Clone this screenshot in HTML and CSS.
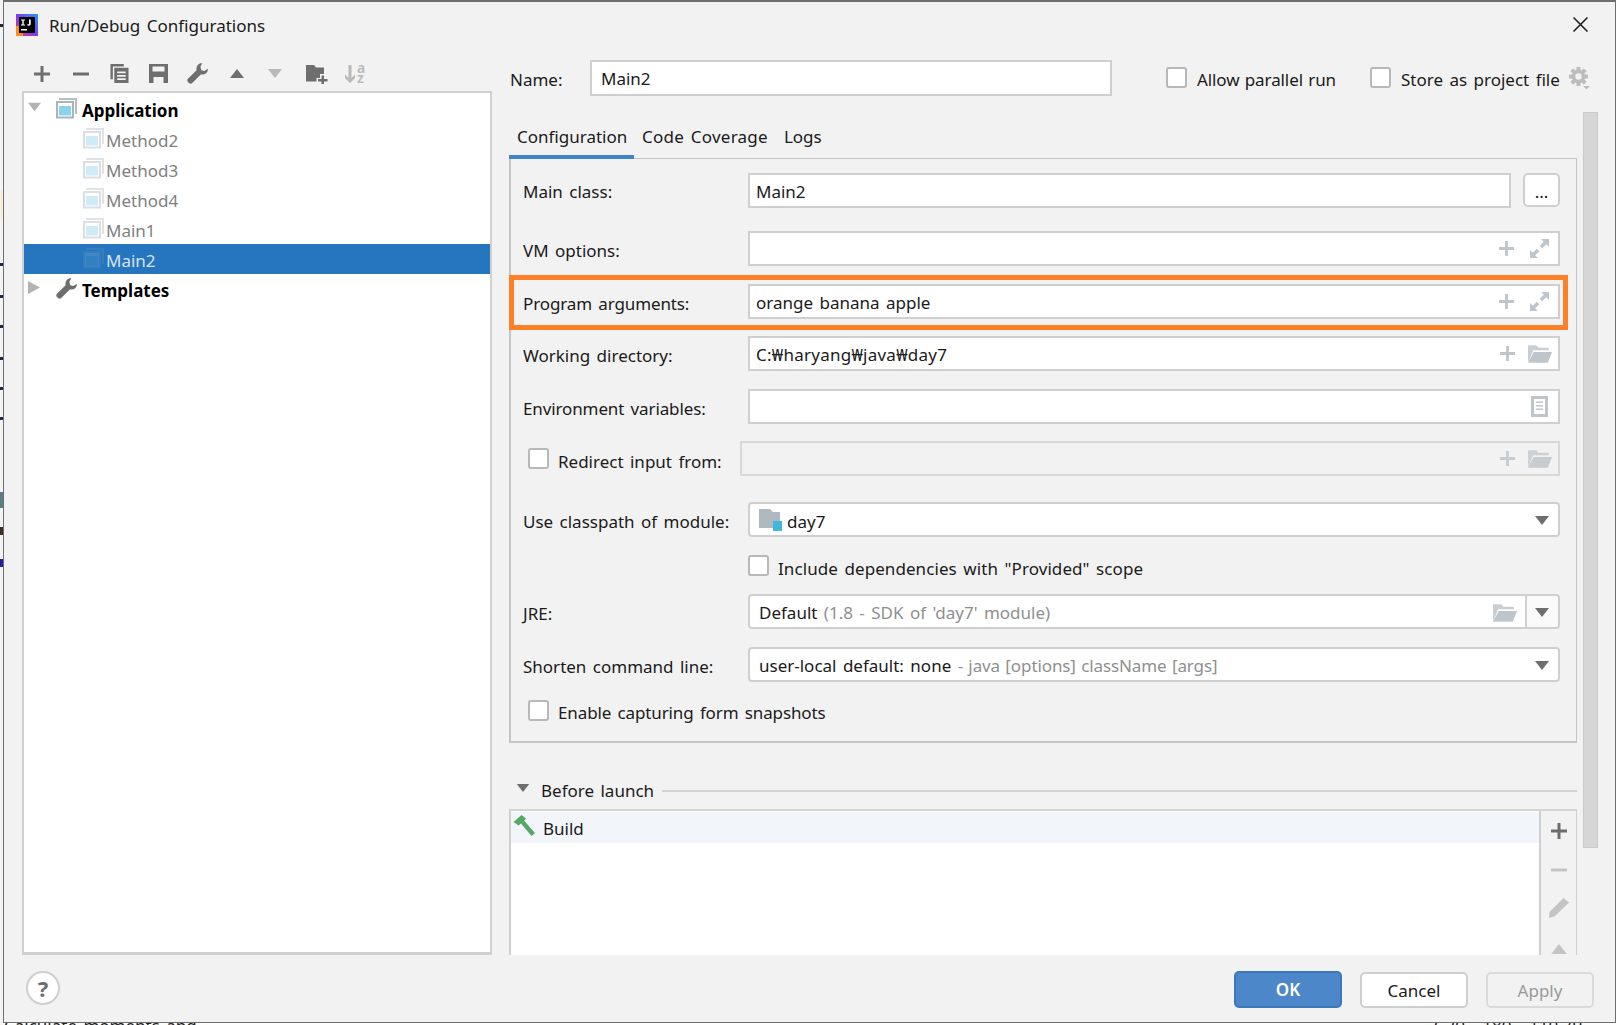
FILE: index.html
```html
<!DOCTYPE html>
<html lang="en">
<head>
<meta charset="utf-8">
<title>Run/Debug Configurations</title>
<link rel="stylesheet" href="styles.css">
</head>
<body>
<svg class="defs" width="0" height="0" aria-hidden="true">
  <symbol id="i-plus" viewBox="0 0 16 16"><path d="M6.5 0h3v6.5H16v3H9.500V16h-3V9.500H0v-3h6.500z" fill="currentColor"/></symbol>
  <symbol id="i-minus" viewBox="0 0 16 16"><rect y="6.500" width="16" height="3" fill="currentColor"/></symbol>
  <symbol id="i-expand" viewBox="0 0 18 18"><path d="M10.500 0H18v7.500l-2.600-2.600-3.900 3.900-2.300-2.300 3.900-3.900zM7.500 18H0v-7.500l2.600 2.600 3.900-3.900 2.300 2.300-3.900 3.900z" fill="currentColor"/></symbol>
  <symbol id="i-open" viewBox="0 0 23 17"><path d="M0 0h8l2 2.500h10V5H5L1.500 13.500 0 16z" fill="currentColor" opacity=".85"/><path d="M5.500 6.500H23l-4 10.500H0z" fill="currentColor"/></symbol>
  <symbol id="i-wrench" viewBox="0 0 22 22"><path d="M16 .3C12-.2 9.500 3 10 7.500L1 16.500C-.5 18 .7 19.800 1.800 20.800 3 22 4.500 22 5.500 21L14.500 12C19 12.500 22.300 10 21.800 6L18.300 8.500 15 7.500 14 3.900z" fill="currentColor"/></symbol>
  <symbol id="i-app" viewBox="0 0 21 21"><path d="M3 0h18v16h-2V2H3z" fill="#b5bec4"/><rect x="1" y="4" width="16" height="15.500" fill="#fff" stroke="#aab4bb" stroke-width="2"/><rect x="3" y="8" width="12" height="9.500" fill="#8bd3ee"/></symbol>
  <symbol id="i-tri" viewBox="0 0 14 9"><path d="M0 0h14L7 9z" fill="currentColor"/></symbol>
</svg>

<div class="sliver"></div>
<div class="backdrop-text backdrop-left">Calculate moments and</div>
<div class="backdrop-text backdrop-right">( 20 , 180 , 110.79</div>

<div class="dialog">
  <header class="titlebar">
    <svg class="logo" viewBox="0 0 22 22">
      <defs><linearGradient id="lg" x1="0" y1="1" x2="1" y2="0"><stop offset="0" stop-color="#f9316f"/><stop offset=".5" stop-color="#7a3ff0"/><stop offset="1" stop-color="#1e9ff0"/></linearGradient></defs>
      <rect width="22" height="22" fill="url(#lg)"/>
      <rect x="0" y="12" width="7" height="10" fill="#fb8c1e"/>
      <rect x="3" y="3" width="16" height="16" fill="#000"/>
      <rect x="5" y="15" width="6" height="1.500" fill="#fff"/>
      <path d="M5 5.500h4v1H7.700v4H9v1H5v-1h1.300v-4H5zM13 5.500h1.700v4.600c0 1.100-.8 1.600-1.900 1.600-.7 0-1.400-.3-1.800-.8l.9-.9c.3.300.5.500.8.500.2 0 .3-.2.300-.5z" fill="#fff"/>
    </svg>
    <h1 class="title">Run/Debug Configurations</h1>
    <svg class="close" viewBox="0 0 15 15"><path d="M.5.500l14 14M14.500.500l-14 14" stroke="#1a1a1a" stroke-width="1.500" fill="none"/></svg>
  </header>

  <div class="main">
    <aside class="left">
      <div class="toolbar">
        <svg class="tool tool-plus"><use href="#i-plus"/></svg>
        <svg class="tool tool-plus"><use href="#i-minus"/></svg>
        <svg class="tool" viewBox="0 0 19 20"><path d="M0 0h14v2.500H2.500V16H0z" fill="currentColor"/><path d="M4 4h15v16H4z" fill="currentColor"/><path d="M7 8h9v1.800H7zM7 11.500h9v1.800H7zM7 15h9v1.800H7z" fill="#f2f2f2"/></svg>
        <svg class="tool" viewBox="0 0 19 19"><path fill-rule="evenodd" d="M0 0h19v19H0zM3.500 2.500v5h12v-5zM4.500 13v6h10v-6z" fill="currentColor"/></svg>
        <svg class="tool tool-wrench"><use href="#i-wrench"/></svg>
        <svg class="tool tool-tri tool-up"><use href="#i-tri"/></svg>
        <svg class="tool tool-tri is-off"><use href="#i-tri"/></svg>
        <svg class="tool tool-folder" viewBox="0 0 22 20"><path d="M0 1h8l2 2.500h8V10h-4v4h-3.500v3.500H0z" fill="currentColor"/><path d="M15.500 11.500h2.500v3.500h3.500v2.500H18V21h-2.500v-3.500H12V15h3.500z" fill="currentColor"/></svg>
        <svg class="tool tool-sort is-off" viewBox="0 0 12 20"><path d="M4.500 1h3v13l3.500-3.500v3.500L6 19 1 14v-3.500L4.500 14z" fill="currentColor"/></svg>
        <span class="sort-letters"><i>a</i><i>z</i></span>
      </div>
      <div class="tree">
        <div class="tree-row">
          <svg class="arrow arrow-down"><use href="#i-tri"/></svg>
          <svg class="node-icon"><use href="#i-app"/></svg>
          <span class="node-bold">Application</span>
        </div>
        <div class="tree-row child"><svg class="node-icon faded"><use href="#i-app"/></svg><span>Method2</span></div>
        <div class="tree-row child"><svg class="node-icon faded"><use href="#i-app"/></svg><span>Method3</span></div>
        <div class="tree-row child"><svg class="node-icon faded"><use href="#i-app"/></svg><span>Method4</span></div>
        <div class="tree-row child"><svg class="node-icon faded"><use href="#i-app"/></svg><span>Main1</span></div>
        <div class="tree-row child selected"><svg class="node-icon faint"><use href="#i-app"/></svg><span>Main2</span></div>
        <div class="tree-row">
          <svg class="arrow arrow-right" viewBox="0 0 12 13"><path d="M0 0l12 6.500L0 13z" fill="currentColor"/></svg>
          <svg class="node-icon wrench-node"><use href="#i-wrench"/></svg>
          <span class="node-bold">Templates</span>
        </div>
      </div>
    </aside>

    <section class="right">
      <div class="name-row">
        <label class="name-label">Name:</label>
        <div class="field name-field">Main2</div>
        <span class="check check-parallel"></span><span class="check-label narrow">Allow parallel run</span>
        <span class="check check-store"></span><span class="check-label">Store as project file</span>
        <svg class="gear" viewBox="0 0 22 23">
          <g fill="#bcbcbc">
            <rect x="7.500" y="0" width="4" height="19" rx=".5"/>
            <rect x="7.500" y="0" width="4" height="19" rx=".5" transform="rotate(45 9.500 9.500)"/>
            <rect x="7.500" y="0" width="4" height="19" rx=".5" transform="rotate(90 9.500 9.500)"/>
            <rect x="7.500" y="0" width="4" height="19" rx=".5" transform="rotate(135 9.500 9.500)"/>
            <path d="M14 19h7l-3.500 3.500z"/>
          </g>
          <circle cx="9.500" cy="9.500" r="5" fill="none" stroke="#bcbcbc" stroke-width="3.500"/>
          <circle cx="9.500" cy="9.500" r="3.200" fill="#f2f2f2"/>
        </svg>
      </div>

      <div class="scroll-wrap">
        <div class="content">
          <nav class="tabs">
            <span class="tab active">Configuration</span>
            <span class="tab tab-wide">Code Coverage</span>
            <span class="tab">Logs</span>
          </nav>
          <div class="panel">
            <div class="row gap-23">
              <label class="label">Main class:</label>
              <div class="field grow">Main2</div>
              <button class="dots">...</button>
            </div>
            <div class="row">
              <label class="label low">VM options:</label>
              <div class="field grow"><span class="field-icons"><svg class="fi-plus"><use href="#i-plus"/></svg><svg class="fi-exp"><use href="#i-expand"/></svg></span></div>
            </div>
            <div class="row gap-17">
              <label class="label low snug">Program arguments:</label>
              <div class="field grow">orange banana apple<span class="field-icons"><svg class="fi-plus"><use href="#i-plus"/></svg><svg class="fi-exp"><use href="#i-expand"/></svg></span></div>
            </div>
            <div class="row">
              <label class="label low">Working directory:</label>
              <div class="field grow">
                <span class="won-path">C:₩haryang₩java₩day7</span>
                <span class="field-icons"><svg class="fi-plus"><use href="#i-plus"/></svg><svg class="fi-open"><use href="#i-open"/></svg></span>
              </div>
            </div>
            <div class="row gap-17">
              <label class="label low snug">Environment variables:</label>
              <div class="field grow"><span class="field-icons">
                <svg class="fi-doc" viewBox="0 0 17 21"><path fill-rule="evenodd" d="M0 0h17v21H0zM3 3v15h11V3z" fill="currentColor"/><path d="M5 5.500h7v1.500H5zM5 9h7v1.500H5zM5 12.500h7V14H5z" fill="currentColor"/></svg>
              </span></div>
            </div>
            <div class="row gap-26">
              <span class="check check-redirect"></span>
              <label class="label-short">Redirect input from:</label>
              <div class="field grow disabled"><span class="field-icons"><svg class="fi-plus"><use href="#i-plus"/></svg><svg class="fi-open"><use href="#i-open"/></svg></span></div>
            </div>
            <div class="row">
              <label class="label low">Use classpath of module:</label>
              <div class="field grow combo">
                <svg class="module" viewBox="0 0 23 22"><path d="M0 0h11l3 3h7v16H0z" fill="#afb9c0"/><rect x="14" y="12" width="9" height="10" fill="#40b6e0"/></svg>
                <span class="module-name">day7</span>
                <svg class="combo-arrow"><use href="#i-tri"/></svg>
              </div>
            </div>
            <div class="row row-check">
              <span class="check check-include"></span>
              <span class="check-label">Include dependencies with "Provided" scope</span>
            </div>
            <div class="row">
              <label class="label low">JRE:</label>
              <div class="field grow combo combo-jre">
                <span class="combo-text">Default <em class="hint">(1.8 - SDK of 'day7' module)</em></span>
                <svg class="fi-open jre-open"><use href="#i-open"/></svg>
                <span class="combo-btn"><svg class="combo-arrow"><use href="#i-tri"/></svg></span>
              </div>
            </div>
            <div class="row">
              <label class="label low">Shorten command line:</label>
              <div class="field grow combo">
                <span class="combo-text">user-local default: none <em class="hint tight">- java [options] className [args]</em></span>
                <svg class="combo-arrow"><use href="#i-tri"/></svg>
              </div>
            </div>
            <div class="row row-check last">
              <span class="check check-redirect"></span>
              <span class="check-label snug">Enable capturing form snapshots</span>
            </div>
            <div class="highlight"></div>
          </div>

          <div class="before">
            <svg class="before-arrow"><use href="#i-tri"/></svg>
            <span class="before-label">Before launch</span>
            <span class="before-line"></span>
          </div>
          <div class="tasks">
            <div class="task-list">
              <div class="task">
                <svg class="hammer" viewBox="0 0 22 22"><path d="M8 0l4.500 3.500-1.800 2.200L21.500 18 18 21 7.500 8.500 5 10.500 0 7z" fill="#56a868"/></svg>
                <span>Build</span>
              </div>
            </div>
            <div class="task-tools">
              <svg class="tt tt-on"><use href="#i-plus"/></svg>
              <svg class="tt"><use href="#i-minus"/></svg>
              <svg class="tt tt-pen" viewBox="0 0 20 20"><path d="M14.500 0L20 4.500 6 18l-6 2 .5-6z" fill="currentColor"/></svg>
              <svg class="tt tt-up"><use href="#i-tri"/></svg>
            </div>
          </div>
        </div>
        <div class="scrollbar"></div>
      </div>
    </section>
  </div>

  <footer class="footer">
    <button class="help">?</button>
    <div class="buttons">
      <button class="btn btn-ok">OK</button>
      <button class="btn">Cancel</button>
      <button class="btn btn-off">Apply</button>
    </div>
  </footer>
</div>
</body>
</html>
```

FILE: styles.css
```css
* { box-sizing: border-box; }
html, body { margin: 0; padding: 0; height: 1025px; overflow: hidden; background: #fff; }
body { font-family: "Noto Sans", "Liberation Sans", sans-serif; font-size: 17px; color: #1a1a1a; position: relative; word-spacing: 2px; }
.defs { position: absolute; }
svg { display: block; flex: none; }

.sliver { position: absolute; left: 0; top: 0; width: 3px; height: 1025px;
  background:
    linear-gradient(#1a2a40, #1a2a40) 0 24px / 3px 3px no-repeat,
    linear-gradient(#1a2a40, #1a2a40) 0 263px / 3px 3px no-repeat,
    linear-gradient(#1a2a40, #1a2a40) 0 295px / 3px 3px no-repeat,
    linear-gradient(#1a2a40, #1a2a40) 0 325px / 3px 3px no-repeat,
    linear-gradient(#1a2a40, #1a2a40) 0 357px / 3px 3px no-repeat,
    linear-gradient(#1a2a40, #1a2a40) 0 387px / 3px 3px no-repeat,
    linear-gradient(#1a2a40, #1a2a40) 0 417px / 3px 3px no-repeat,
    linear-gradient(#f4f1dc, #f4f1dc) 0 190px / 3px 30px no-repeat,
    linear-gradient(#5a7f86, #5a7f86) 0 492px / 3px 16px no-repeat,
    linear-gradient(#3a3020, #3a3020) 0 527px / 3px 8px no-repeat,
    linear-gradient(#20209a, #20209a) 0 559px / 3px 8px no-repeat,
    #f4f4f4; }
.backdrop-text { position: absolute; top: 1014px; font-size: 17px; color: #222; white-space: nowrap; }
.backdrop-left { left: 4px; }
.backdrop-right { left: 1434px; }

.dialog { position: relative; margin-left: 3px; width: 1613px; height: 1023px; display: flex; flex-direction: column; background: #f2f2f2; border: 1px solid #6f6f6f; border-width: 2px 1px 1px 1px; }

.titlebar { height: 47px; flex: none; display: flex; align-items: center; padding: 0 27px 0 12px; }
.logo { width: 22px; height: 22px; margin-top: -2px; }
.title { font-size: 17px; font-weight: 400; margin: 0 0 0 11px; color: #1a1a1a; }
.close { width: 15px; height: 15px; margin-left: auto; margin-top: -3px; }

.main { flex: 1; min-height: 0; display: flex; overflow: hidden; }
.left { width: 488px; flex: none; padding-left: 18px; display: flex; flex-direction: column; }
.toolbar { height: 42px; flex: none; display: flex; align-items: center; color: #6e6e6e; padding-top: 7px; }
.tool { width: 19px; height: 19px; margin-left: 10px; margin-right: 10px; }
.tool-plus { width: 16px; height: 16px; margin-left: 12px; margin-right: 11px; }
.tool-wrench { width: 21px; height: 21px; margin-left: 9px; margin-right: 10px; }
.tool-tri { width: 18px; height: 9px; }
.tool-up { transform: scaleY(-1); }
.tool-folder { width: 22px; height: 20px; margin-left: 12px; margin-right: 8px; }
.tool-sort { width: 12px; height: 20px; margin-left: 8px; margin-right: 1px; }
.is-off { color: #b9b9b9; }
.sort-letters { display: flex; flex-direction: column; font-size: 14px; line-height: 10px; color: #b9b9b9; font-weight: 600; margin-top: -2px; }
.sort-letters i { font-style: normal; }

.tree { flex: 1; background: #fff; border: 2px solid #d0d0d0; border-bottom-width: 3px; padding-top: 1px; }
.tree-row { height: 30px; display: flex; align-items: center; color: #808080; padding-left: 4px; }
.tree-row span { padding-top: 2px; }
.tree-row.child { padding-left: 59px; }
.selected { background: #2675bf; color: #d7e3ef; }
.arrow { color: #b3b3b3; }
.arrow-down { width: 13px; height: 12px; margin-top: -4px; }
.arrow-right { width: 12px; height: 13px; margin-top: -4px; margin-right: 1px; }
.node-icon { width: 21px; height: 21px; margin-right: 5px; margin-top: -2px; }
.tree-row:not(.child) .node-icon { margin-left: 15px; }
.tree-row.child .node-icon { margin-right: 2px; }
.faded { opacity: .42; }
.faint { opacity: .12; }
.wrench-node { color: #6e6e6e; }
.node-bold { font-weight: 700; color: #000; }

.right { flex: 1; min-width: 0; display: flex; flex-direction: column; padding-left: 17px; }
.name-row { height: 63px; padding-top: 11px; flex: none; display: flex; align-items: flex-start; }
.name-label { width: 81px; line-height: 40px; padding-left: 1px; }
.field { height: 35px; background: #fff; border: 2px solid #cfcfcf; line-height: 33px; padding-left: 6px; position: relative; white-space: nowrap; color: #1a1a1a; }
.name-field { width: 522px; height: 36px; padding-left: 9px; line-height: 34px; }
.won-path { letter-spacing: .25px; }
.check { width: 21px; height: 21px; flex: none; background: #fff; border: 2px solid #b8b8b8; border-radius: 3px; display: block; }
.check-label { white-space: nowrap; }
.name-row .check { margin-top: 7px; }
.name-row .check-label { margin-left: 10px; line-height: 40px; }
.narrow { word-spacing: 1px; letter-spacing: -.1px; }
.snug { letter-spacing: -.12px; }
.check-parallel { margin-left: 54px; }
.check-store { margin-left: 34px; }
.gear { width: 22px; height: 23px; margin-left: 9px; margin-top: 7px; }

.scroll-wrap { flex: 1; min-height: 0; display: flex; align-items: flex-start; }
.content { width: 1068px; flex: none; }
.scrollbar { width: 15px; height: 736px; margin-left: 6px; background: #d6d6d6; border: 1px solid #cacaca; }

.tabs { height: 47px; display: flex; align-items: flex-end; position: relative; z-index: 1; }
.tab { height: 47px; padding: 10px 8px 0; line-height: 30px; white-space: nowrap; }
.tab.active { border-bottom: 4px solid #4083c9; width: 125px; }
.tab-wide { letter-spacing: .25px; }
.panel { position: relative; height: 585px; border: 1px solid #c4c4c4; border-left-width: 2px; border-bottom-width: 2px; margin-top: -1px; padding: 14px 16px 0 12px; background: #f2f2f2; }

.row { height: 35px; display: flex; margin-bottom: 18px; line-height: 35px; align-items: flex-start; }
.gap-17 { margin-bottom: 17px; }
.gap-23 { margin-bottom: 23px; }
.gap-26 { margin-bottom: 26px; }
.row-check { height: 21px; }
.label { width: 225px; flex: none; line-height: 37px; white-space: nowrap; }
.label.low { line-height: 39px; }
.label-short { width: 182px; flex: none; margin-left: 9px; line-height: 41px; white-space: nowrap; }
.grow { flex: 1; min-width: 0; }
.check-redirect { margin-left: 5px; margin-top: 7px; }
.row.last .check-redirect { margin-top: 0; }
.row.last .check-label { margin-left: 9px; line-height: 26px; }
.check-include { margin-left: 225px; }
.check-include + .check-label { margin-left: 9px; line-height: 27px; letter-spacing: .08px; }

.dots { width: 37px; height: 34px; margin-left: 12px; background: #fff; border: 2px solid #cfcfcf; border-radius: 5px; font: inherit; padding: 0; line-height: 34px; color: #1a1a1a; }
.field-icons { position: absolute; right: 7px; top: 0; bottom: 0; display: flex; align-items: center; color: #bfc6cb; }
.fi-plus { width: 15px; height: 15px; margin-right: 16px; }
.fi-exp { width: 19px; height: 19px; margin-right: 2px; }
.fi-open { width: 24px; height: 18px; margin-left: -3px; margin-right: -1px; }
.fi-doc { width: 17px; height: 21px; margin-right: 3px; }
.disabled { background: #f2f2f2; border-color: #d8d8d8; }
.disabled .field-icons { opacity: .85; }

.combo { border-radius: 4px; display: flex; align-items: center; padding-left: 9px; }
.combo-text { margin-top: 1px; }
.module { width: 23px; height: 22px; }
.module-name { margin-left: 5px; margin-top: 3px; }
.combo-arrow { position: absolute; right: 9px; top: 12px; width: 14px; height: 9px; color: #6e6e6e; }
.hint { font-style: normal; color: #8f8f8f; }
.tight { letter-spacing: -.1px; word-spacing: 1px; }
.combo-jre .jre-open { position: absolute; right: 41px; top: 8px; color: #bfc6cb; margin: 0; }
.combo-btn { position: absolute; right: 0; top: 0; bottom: 0; width: 33px; background: #fafafa; border-left: 2px solid #cfcfcf; border-radius: 0 3px 3px 0; }

.highlight { position: absolute; left: -2px; top: 116px; width: 1059px; height: 55px; border: 5px solid #ff7f27; pointer-events: none; }

.before { height: 66px; display: flex; align-items: center; padding-top: 28px; }
.before-arrow { width: 14px; height: 8px; color: #6e6e6e; margin-left: 7px; margin-top: -4px; }
.before-label { margin-left: 11px; white-space: nowrap; }
.before-line { flex: 1; height: 2px; background: #d2d2d2; margin-left: 8px; margin-top: 1px; }

.tasks { height: 300px; border-style: solid; border-color: #d4d4d4 #cfcfcf #cfcfcf #cfcfcf; border-width: 2px 1px 0 2px; display: flex; }
.task-list { flex: 1; background: #fff; }
.task { height: 31px; background: #f2f5f9; display: flex; align-items: center; margin-top: 1px; }
.task span { margin-left: 7px; margin-top: 2px; }
.hammer { width: 23px; height: 22px; margin-left: 2px; margin-top: -3px; }
.task-tools { width: 37px; flex: none; border-left: 2px solid #cfcfcf; color: #c4c4c4; padding-top: 12px; display: flex; flex-direction: column; align-items: center; }
.tt { width: 16px; height: 16px; margin-bottom: 23px; flex: none; }
.tt-on { color: #6e6e6e; }
.tt-pen { width: 20px; height: 20px; margin-top: -3px; margin-bottom: 26px; }
.tt-up { transform: scaleY(-1); width: 18px; height: 10px; }

.footer { height: 67px; flex: none; display: flex; justify-content: space-between; align-items: flex-start; padding: 16px 21px 0 22px; }
.help { width: 34px; height: 34px; border-radius: 50%; border: 2px solid #cfcfcf; background: #fff; font: 700 22px "Noto Sans", sans-serif; color: #6e6e6e; padding: 0; }
.buttons { display: flex; gap: 18px; }
.btn { width: 108px; height: 36px; background: #fff; border: 2px solid #cfcfcf; border-radius: 5px; font: inherit; word-spacing: inherit; color: #1a1a1a; padding: 0; margin-top: 1px; }
.btn-ok { background: #4b87c9; border-color: #3f78b8; color: #fff; font-weight: 600; height: 37px; margin-top: 0; }
.btn-off { background: #f2f2f2; border-color: #dadada; color: #9a9a9a; }
```
